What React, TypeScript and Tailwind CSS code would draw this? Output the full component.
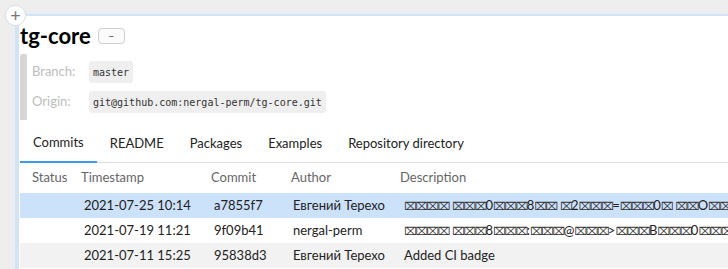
import React from "react";

// missing-glyph boxes as they show up in the original description text
function Desc({ text }: { text: string }) {
  const runs = text.match(/#+|[^#]+/g) ?? [];
  return (
    <>
      {runs.map((run, i) =>
        run[0] === "#" ? (
          <span key={i} className="text-[11px] tracking-[-1.5px] text-[#333]" style={{ fontFamily: '"DejaVu Sans", sans-serif' }}>
            {"\u2327".repeat(run.length)}
          </span>
        ) : (
          <span key={i}>{run}</span>
        )
      )}
    </>
  );
}

const commits = [
  {
    ts: "2021-07-25 10:14",
    hash: "a7855f7",
    author: "Евгений Терехо",
    desc: "#### ###0###8## #2###=###0# ##O### ###@##",
    cls: "bg-[#cce1fa]",
  },
  {
    ts: "2021-07-19 11:21",
    hash: "9f09b41",
    author: "nergal-perm",
    desc: "#### ###8###:###@###>###B###0###A###:#",
    cls: "bg-white",
  },
  {
    ts: "2021-07-11 15:25",
    hash: "95838d3",
    author: "Евгений Терехо",
    desc: "Added CI badge",
    cls: "bg-[#f2f2f2]",
  },
];

const tabs = ["Commits", "README", "Packages", "Examples", "Repository directory"];

const mono = { fontFamily: '"DejaVu Sans Mono", monospace' };

export default function App() {
  const font = { fontFamily: 'Lato, "Noto Sans", sans-serif' };
  return (
    <div className="relative w-[728px] h-[269px] overflow-hidden bg-[#eeeeee]" style={font}>
      {/* expand button */}
      <div className="absolute left-[5px] top-[5px] z-10 w-[21px] h-[21px] rounded-full bg-white border border-[#dddddd] flex items-center justify-center text-[#777] text-[18px] leading-none pb-[1px]">
        +
      </div>

      <div className="ml-[15px] mt-[14px] h-[260px] bg-white border-l-[4px] border-t-[2px] border-[#d2e3f5] shadow-[-1px_-1px_3px_#e4edf7] overflow-hidden">
        {/* title */}
        <div className="h-[37px] pt-[2px] pl-[1px] flex items-center gap-[7px]">
          <h1 className="text-[22px] font-bold text-black leading-none">tg-core</h1>
          <button className="w-[27px] h-[16px] rounded-[4px] border border-[#cfcfcf] bg-[#fbfbfb] flex items-center justify-center text-[#555] text-[11px] leading-none">
            –
          </button>
        </div>

        {/* repo info */}
        <div className="mt-[1px] ml-[1px] flex h-[66px]">
          <div className="w-[7px] shrink-0 bg-[#d6d6d6] rounded-t-[2px]" />
          <div className="flex flex-col justify-center gap-[8px] pl-[5px]">
            <div className="flex items-center">
              <span className="w-[57px] text-[13px] text-[#bdbdbd]">Branch:</span>
              <span className="h-[22px] px-[4px] flex items-center rounded-[3px] bg-[#efefef] text-[10px] text-[#333]" style={mono}>
                master
              </span>
            </div>
            <div className="flex items-center">
              <span className="w-[57px] text-[13px] text-[#bdbdbd]">Origin:</span>
              <span className="h-[22px] px-[4px] flex items-center rounded-[3px] bg-[#efefef] text-[10px] text-[#333]" style={mono}>
                git@github.com:nergal-perm/tg-core.git
              </span>
            </div>
          </div>
        </div>

        {/* tabs */}
        <div className="mt-[5px] ml-[1px] flex h-[38px] border-b border-[#dddddd]">
          {tabs.map((t, i) => (
            <div
              key={t}
              className={
                "px-[13px] flex items-center text-[13px] text-[#222] " +
                (i === 0 ? "border-b-2 border-[#3d9be9] -mb-[1px]" : "")
              }
            >
              {t}
            </div>
          ))}
        </div>

        {/* commits table */}
        <div className="ml-[1px] text-[13px]">
          <div className="flex h-[30px] items-center text-[#666]">
            <div className="w-[58px] shrink-0 pl-[12px]">Status</div>
            <div className="w-[130px] shrink-0 pl-[3px]">Timestamp</div>
            <div className="w-[80px] shrink-0 pl-[3px]">Commit</div>
            <div className="w-[109px] shrink-0 pl-[3px]">Author</div>
            <div className="pl-[3px]">Description</div>
          </div>
          {commits.map((c) => (
            <div key={c.hash} className={"flex h-[25px] items-center text-[#222] whitespace-nowrap overflow-hidden " + c.cls}>
              <div className="w-[58px] shrink-0" />
              <div className="w-[130px] shrink-0 pl-[6px]">{c.ts}</div>
              <div className="w-[80px] shrink-0 pl-[6px]">{c.hash}</div>
              <div className="w-[109px] shrink-0 pl-[5px] overflow-hidden">{c.author}</div>
              <div className="pl-[7px] min-w-0 overflow-hidden">
                <Desc text={c.desc} />
              </div>
            </div>
          ))}
        </div>
      </div>
    </div>
  );
}
